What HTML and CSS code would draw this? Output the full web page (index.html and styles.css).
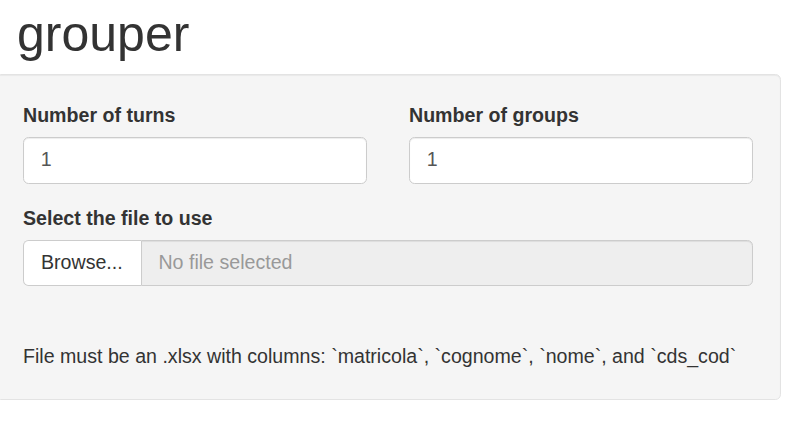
FILE: index.html
```html
<!DOCTYPE html>
<html>
<head>
<meta charset="utf-8">
<title>grouper</title>
<link rel="stylesheet" href="styles.css">
</head>
<body>
<div class="page">
  <h1 class="title">grouper</h1>
  <div class="well">
    <div class="row">
      <div class="form-group">
        <label class="label">Number of turns</label>
        <div class="form-control">1</div>
      </div>
      <div class="form-group">
        <label class="label">Number of groups</label>
        <div class="form-control">1</div>
      </div>
    </div>
    <div class="form-group">
      <label class="label">Select the file to use</label>
      <div class="input-group">
        <span class="btn">Browse...</span>
        <span class="file-name">No file selected</span>
      </div>
    </div>
    <p class="help">File must be an .xlsx with columns: `matricola`, `cognome`, `nome`, and `cds_cod`</p>
  </div>
</div>
</body>
</html>
```

FILE: styles.css
```css
html, body {
  margin: 0;
  padding: 0;
  background: #ffffff;
}
body {
  font-family: "Liberation Sans", Arial, sans-serif;
  font-size: 19.6px;
  line-height: 1.42857;
  color: #333333;
}
.page {
  padding-left: 14px;
  width: 767px;
}
.title {
  font-family: "Liberation Sans", Arial, sans-serif;
  font-weight: 400;
  font-size: 50px;
  line-height: 1.1;
  margin: 7px 0 12px 3px;
  color: #333333;
}
.well {
  margin-left: -18.6px;
  width: 730px;
  padding: 26.6px;
  background: #f5f5f5;
  border: 1px solid #e3e3e3;
  border-radius: 5.6px;
  box-shadow: inset 0 1px 1px rgba(0, 0, 0, 0.05);
}
.row {
  display: grid;
  grid-template-columns: 1fr 1fr;
  column-gap: 42px;
}
.form-group {
  margin-bottom: 21px;
}
.label {
  display: block;
  font-weight: 700;
  margin-bottom: 7px;
  max-width: 100%;
}
.form-control {
  height: 47.6px;
  box-sizing: border-box;
  padding: 8.4px 16.8px;
  background: #ffffff;
  border: 1px solid #cccccc;
  border-radius: 5.6px;
  box-shadow: inset 0 1px 1px rgba(0, 0, 0, 0.075);
  color: #555555;
}
.input-group {
  display: flex;
  height: 46px;
  margin-top: 3px;
}
.btn {
  box-sizing: border-box;
  padding: 0 18px 0 17px;
  display: flex;
  align-items: center;
  background: #ffffff;
  border: 1px solid #cccccc;
  border-right: none;
  border-radius: 5.6px 0 0 5.6px;
  color: #333333;
}
.file-name {
  flex: 1;
  box-sizing: border-box;
  display: flex;
  align-items: center;
  padding: 0 16.8px;
  background: #eeeeee;
  border: 1px solid #cccccc;
  border-radius: 0 5.6px 5.6px 0;
  box-shadow: inset 0 1px 1px rgba(0, 0, 0, 0.075);
  color: #999999;
}
.help {
  margin: 57px 0 1px 0;
}
```
